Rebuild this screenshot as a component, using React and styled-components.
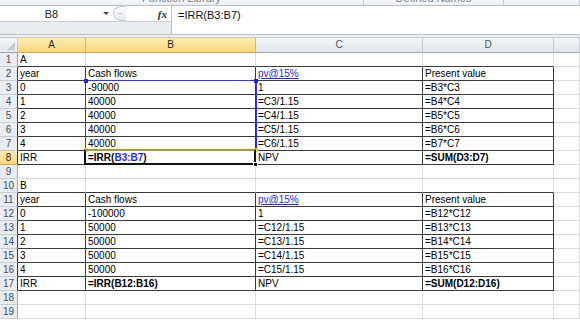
import React from "react";
import styled, { createGlobalStyle } from "styled-components";

const GlobalStyle = createGlobalStyle`
  html, body {
    margin: 0;
    padding: 0;
    background: #fff;
  }
  body {
    font-family: "Liberation Sans", Arial, sans-serif;
    overflow: hidden;
  }
`;

const COLS = "18px 68px 170px 167px 131px 1fr";
const DARK = "#3a3a3a";
const GRID = "#dadcdd";

const Window = styled.div`
  width: 580px;
  height: 320px;
  overflow: hidden;
  display: flex;
  flex-direction: column;
  background: #fff;
`;

const Ribbon = styled.div`
  height: 5px;
  flex-shrink: 0;
  display: flex;
  overflow: hidden;
  background: linear-gradient(#f5f7fa, #eaeef3);
  border-bottom: 1px solid #b9c0ca;
`;

const Group = styled.div`
  width: ${(p) => (p.$w ? `${p.$w}px` : "auto")};
  flex: ${(p) => (p.$w ? "none" : 1)};
  border-right: 1px solid #c9ced6;
  display: flex;
  justify-content: center;
  overflow: hidden;
`;

const GroupLabel = styled.span`
  font-size: 11px;
  line-height: 11px;
  margin-top: -7px;
  color: #7d838b;
  white-space: nowrap;
`;

const FormulaBar = styled.div`
  height: 28px;
  flex-shrink: 0;
  display: flex;
  border-bottom: 1px solid #b9c0ca;
`;

const NameArea = styled.div`
  width: 171px;
  display: flex;
  flex-direction: column;
  background: #e8ebef;
  border-right: 1px solid #b9c0ca;
`;

const NameRow = styled.div`
  height: 15px;
  display: flex;
  align-items: center;
  background: #fff;
  border-bottom: 1px solid #cfd3d9;
`;

const NameBox = styled.div`
  width: 113px;
  height: 100%;
  display: flex;
  align-items: center;
  font-size: 11px;
  color: #222;
`;

const NameText = styled.span`
  flex: 1;
  text-align: center;
`;

const Caret = styled.span`
  width: 0;
  height: 0;
  margin-right: 4px;
  border-left: 3px solid transparent;
  border-right: 3px solid transparent;
  border-top: 3px solid #444;
`;

const Knob = styled.div`
  width: 13px;
  height: 15px;
  box-sizing: border-box;
  border: 1px solid #c2c7ce;
  border-right: none;
  border-radius: 8px 0 0 8px;
  background: linear-gradient(#fbfbfc, #e6e9ed);
  display: flex;
  align-items: center;
  justify-content: center;
  &::after {
    content: "";
    width: 4px;
    height: 1px;
    background: #b9bec5;
  }
`;

const Fx = styled.span`
  margin-left: auto;
  margin-right: 4px;
  font-family: "Liberation Serif", "Times New Roman", serif;
  font-style: italic;
  font-weight: 700;
  font-size: 11px;
  color: #333;
`;

const FormulaInput = styled.div`
  flex: 1;
  background: #fff;
  padding: 2px 6px;
  font-size: 11px;
  line-height: 14px;
  color: #111;
`;

const Spacer = styled.div`
  height: 2px;
  flex-shrink: 0;
  background: #eef0f3;
  border-bottom: 1px solid #c4c9d0;
`;

const HeaderRow = styled.div`
  display: grid;
  grid-template-columns: ${COLS};
  height: 15px;
  flex-shrink: 0;
`;

const ColHead = styled.div`
  box-sizing: border-box;
  height: 15px;
  font-size: 10px;
  line-height: 14px;
  text-align: center;
  color: ${(p) => (p.$on ? "#2a2a2a" : "#45505e")};
  background: ${(p) =>
    p.$on
      ? "linear-gradient(#fcebb0, #f8d77c)"
      : "linear-gradient(#f4f6f8, #e2e6eb)"};
  border-right: 1px solid ${(p) => (p.$on ? "#e3b75a" : "#c5cad1")};
  border-bottom: 1px solid ${(p) => (p.$on ? "#eaa43c" : "#9ea6b1")};
`;

const Corner = styled(ColHead)`
  position: relative;
  &::after {
    content: "";
    position: absolute;
    right: 2px;
    bottom: 2px;
    border-left: 8px solid transparent;
    border-bottom: 8px solid #c9cdd3;
  }
`;

const Body = styled.div`
  position: relative;
  display: grid;
  grid-template-columns: ${COLS};
  grid-auto-rows: 14px;
`;

const RowHead = styled.div`
  box-sizing: border-box;
  font-size: 10px;
  line-height: 13px;
  text-align: center;
  color: ${(p) => (p.$on ? "#2a2a2a" : "#45505e")};
  background: ${(p) =>
    p.$on ? "linear-gradient(#fcebb0, #f8d77c)" : "#e9ecf0"};
  border-bottom: 1px solid ${(p) => (p.$on ? "#eaa43c" : "#c9cdd3")};
  border-right: 1px solid ${(p) => (p.$box ? DARK : "#9ea6b1")};
`;

const Cell = styled.div`
  position: relative;
  box-sizing: border-box;
  padding: 0 2px;
  font-size: 10px;
  line-height: 13px;
  white-space: nowrap;
  color: #000;
  font-weight: ${(p) => (p.$bold ? 700 : 400)};
  border-right: 1px solid ${(p) => (p.$box ? DARK : GRID)};
  border-bottom: 1px solid ${(p) => (p.$box || p.$cap ? DARK : GRID)};

  ${(p) =>
    p.$active &&
    `
    z-index: 2;
    &::after {
      content: "";
      position: absolute;
      left: -2px;
      top: -2px;
      right: -1px;
      bottom: -1px;
      border: 2px solid #111;
      border-top-color: #a49a3c;
    }
    &::before {
      content: "";
      position: absolute;
      right: -3px;
      bottom: -3px;
      width: 5px;
      height: 5px;
      background: #111;
      border: 1px solid #fff;
      box-sizing: border-box;
      z-index: 3;
    }
  `}
`;

const Link = styled.span`
  color: #2a2ae6;
  text-decoration: underline;
`;

const Ref = styled.span`
  color: #2a2ae6;
`;

const Range = styled.div`
  position: absolute;
  left: 85px;
  top: 27px;
  width: 172px;
  height: 71px;
  box-sizing: border-box;
  border: 1px solid #3434f0;
  pointer-events: none;
  z-index: 1;
`;

const Dot = styled.span`
  position: absolute;
  width: 4px;
  height: 4px;
  background: ${(p) => p.$c};
  ${(p) => (p.$top ? "top: -2px;" : "bottom: -2px;")}
  ${(p) => (p.$left ? "left: -2px;" : "right: -2px;")}
`;

// a cell holding { href } is shown as an underlined link
const L = (t) => ({ href: t });

const blockA = [
  ["year", "Cash flows", L("pv@15%"), "Present value"],
  ["0", "-90000", "1", "=B3*C3"],
  ["1", "40000", "=C3/1.15", "=B4*C4"],
  ["2", "40000", "=C4/1.15", "=B5*C5"],
  ["3", "40000", "=C5/1.15", "=B6*C6"],
  ["4", "40000", "=C6/1.15", "=B7*C7"],
];

const blockB = [
  ["year", "Cash flows", L("pv@15%"), "Present value"],
  ["0", "-100000", "1", "=B12*C12"],
  ["1", "50000", "=C12/1.15", "=B13*C13"],
  ["2", "50000", "=C13/1.15", "=B14*C14"],
  ["3", "50000", "=C14/1.15", "=B15*C15"],
  ["4", "50000", "=C15/1.15", "=B16*C16"],
];

const irrA = (
  <>
    =IRR(<Ref>B3:B7</Ref>)
  </>
);

const rows = [
  { cells: ["A", "", "", ""], cap: true },
  ...blockA.map((c) => ({ cells: c, box: true })),
  {
    cells: ["IRR", irrA, "NPV", "=SUM(D3:D7)"],
    box: true,
    bold: [1, 3],
    on: true,
  },
  { cells: ["", "", "", ""] },
  { cells: ["B", "", "", ""], cap: true },
  ...blockB.map((c) => ({ cells: c, box: true })),
  {
    cells: ["IRR", "=IRR(B12:B16)", "NPV", "=SUM(D12:D16)"],
    box: true,
    bold: [1, 3],
  },
  { cells: ["", "", "", ""] },
  { cells: ["", "", "", ""] },
];

const show = (c) =>
  c && typeof c === "object" && c.href ? <Link>{c.href}</Link> : c;

export default function App() {
  return (
    <Window>
      <GlobalStyle />
      <Ribbon>
        <Group $w={363}>
          <GroupLabel>Function Library</GroupLabel>
        </Group>
        <Group $w={139}>
          <GroupLabel>Defined Names</GroupLabel>
        </Group>
        <Group />
      </Ribbon>

      <FormulaBar>
        <NameArea>
          <NameRow>
            <NameBox>
              <NameText>B8</NameText>
              <Caret />
            </NameBox>
            <Knob />
            <Fx>fx</Fx>
          </NameRow>
        </NameArea>
        <FormulaInput>=IRR(B3:B7)</FormulaInput>
      </FormulaBar>
      <Spacer />

      <HeaderRow>
        <Corner />
        <ColHead $on>A</ColHead>
        <ColHead $on>B</ColHead>
        <ColHead>C</ColHead>
        <ColHead>D</ColHead>
        <ColHead />
      </HeaderRow>

      <Body>
        {rows.map((r, i) => (
          <React.Fragment key={i}>
            <RowHead $on={r.on} $box={r.box}>
              {i + 1}
            </RowHead>
            {r.cells.map((c, j) => (
              <Cell
                key={j}
                $box={r.box}
                $cap={r.cap}
                $bold={r.bold && r.bold.includes(j)}
                $active={r.on && j === 1}
              >
                {show(c)}
              </Cell>
            ))}
            <Cell />
          </React.Fragment>
        ))}
        <Range>
          <Dot $top $left $c="#2020e0" />
          <Dot $top $c="#2020e0" />
          <Dot $left $c="#e8d82a" />
          <Dot $c="#e8d82a" />
        </Range>
      </Body>
    </Window>
  );
}
